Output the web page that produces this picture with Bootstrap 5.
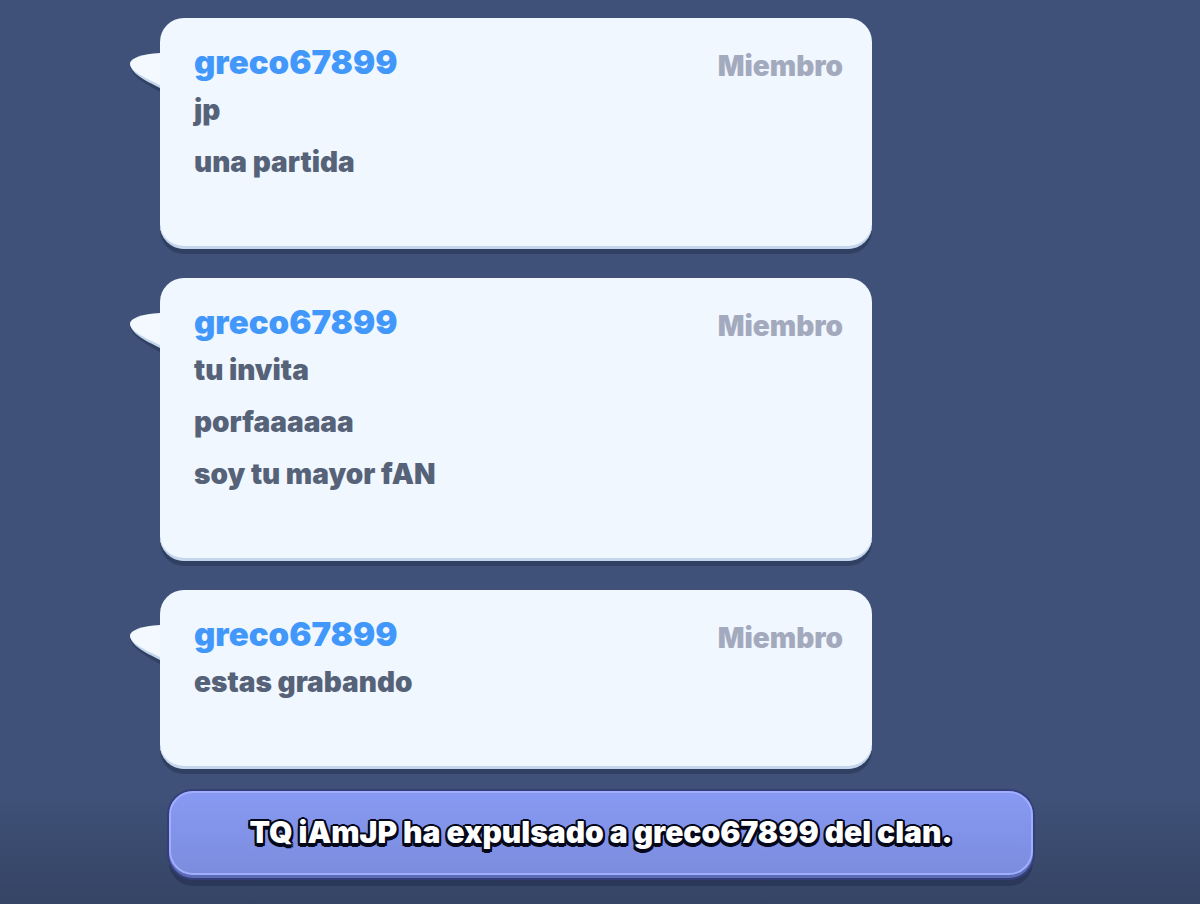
<!DOCTYPE html>
<html lang="es">
<head>
<meta charset="utf-8">
<meta name="viewport" content="width=device-width, initial-scale=1">
<title>Chat del clan</title>
<link href="https://cdn.jsdelivr.net/npm/bootstrap@5.3.0/dist/css/bootstrap.min.css" rel="stylesheet">
<style>
  body {
    background: linear-gradient(to bottom, #3f5178 0, #3f5178 calc(100% - 110px), #354465 100%);
    font-family: Inter, "Noto Sans", sans-serif;
    font-weight: 900;
  }
  .chat-log { padding: 18px 328px 0 160px; gap: 29px; }
  .bubble {
    padding: 20px 29px 60px 34px;
    background: #f0f7ff;
    border-radius: 24px;
    border-bottom: 1px solid #c3d5eb;
    box-shadow: inset 0 -2px 0 #c3d5eb, 0 5px 0 #2f4063;
  }
  .bubble-tail { left: -30px; top: 34px; width: 30px; height: 42px; }
  .bubble-head { height: 46px; }
  .player { font-size: 33px; line-height: 48px; color: #4297fb; }
  .player:not(:hover) { text-decoration: none; }
  .role { font-size: 28px; line-height: 56px; color: #a3aabd; }
  .message { font-size: 28px; line-height: 52px; color: #566278; }
  .notice-area { padding: 22px 167px 24px 169px; }
  .notice-box {
    border-radius: 24px;
    padding-bottom: 3px;
    background: #5c6cb5;
    box-shadow: 0 0 0 2px #343f7a, 0 8px 0 #2b3859;
  }
  .notice-face {
    min-height: 84px;
    padding-bottom: 3px;
    border: 2px solid #a1adff;
    border-radius: 24px;
    background: linear-gradient(#8799f2, #7c8dde);
    color: #fff;
    font-size: 30px;
    line-height: 36px;
    text-shadow: -2px -1px 0 #05071a, 2px -1px 0 #05071a, 0 -2px 0 #05071a, -2px 1px 0 #05071a,
      2px 1px 0 #05071a, -2px 3px 0 #05071a, 2px 3px 0 #05071a, 0 4px 0 #05071a;
  }
</style>
</head>
<body class="min-vh-100">
<svg class="d-none" aria-hidden="true">
  <symbol id="tail" viewBox="0 0 30 42">
    <path fill="#2f4063" d="M0 15C2 24 14 31 30 40V10Z"/>
    <path fill="#c3d5eb" d="M0 11C0 21 14 28 30 36V5Z"/>
    <path fill="#f4f9ff" d="M0 11C1 6 12 2 30 1V33C15 26 0 19 0 11Z"/>
  </symbol>
</svg>
<main>
  <section class="chat-log d-flex flex-column" aria-label="Chat">
    <article class="bubble position-relative">
      <svg class="bubble-tail position-absolute" aria-hidden="true"><use href="#tail"/></svg>
      <header class="bubble-head d-flex justify-content-between">
        <a class="player" href="#">greco67899</a><span class="role">Miembro</span>
      </header>
      <p class="message m-0">jp</p>
      <p class="message m-0">una partida</p>
    </article>
    <article class="bubble position-relative">
      <svg class="bubble-tail position-absolute" aria-hidden="true"><use href="#tail"/></svg>
      <header class="bubble-head d-flex justify-content-between">
        <a class="player" href="#">greco67899</a><span class="role">Miembro</span>
      </header>
      <p class="message m-0">tu invita</p>
      <p class="message m-0">porfaaaaaa</p>
      <p class="message m-0">soy tu mayor fAN</p>
    </article>
    <article class="bubble position-relative">
      <svg class="bubble-tail position-absolute" aria-hidden="true"><use href="#tail"/></svg>
      <header class="bubble-head d-flex justify-content-between">
        <a class="player" href="#">greco67899</a><span class="role">Miembro</span>
      </header>
      <p class="message m-0">estas grabando</p>
    </article>
  </section>
  <div class="notice-area">
    <div class="notice-box">
      <p class="notice-face mb-0 d-flex align-items-center justify-content-center text-center">TQ iAmJP ha expulsado a greco67899 del clan.</p>
    </div>
  </div>
</main>
<script src="https://cdn.jsdelivr.net/npm/bootstrap@5.3.0/dist/js/bootstrap.bundle.min.js"></script>
</body>
</html>
